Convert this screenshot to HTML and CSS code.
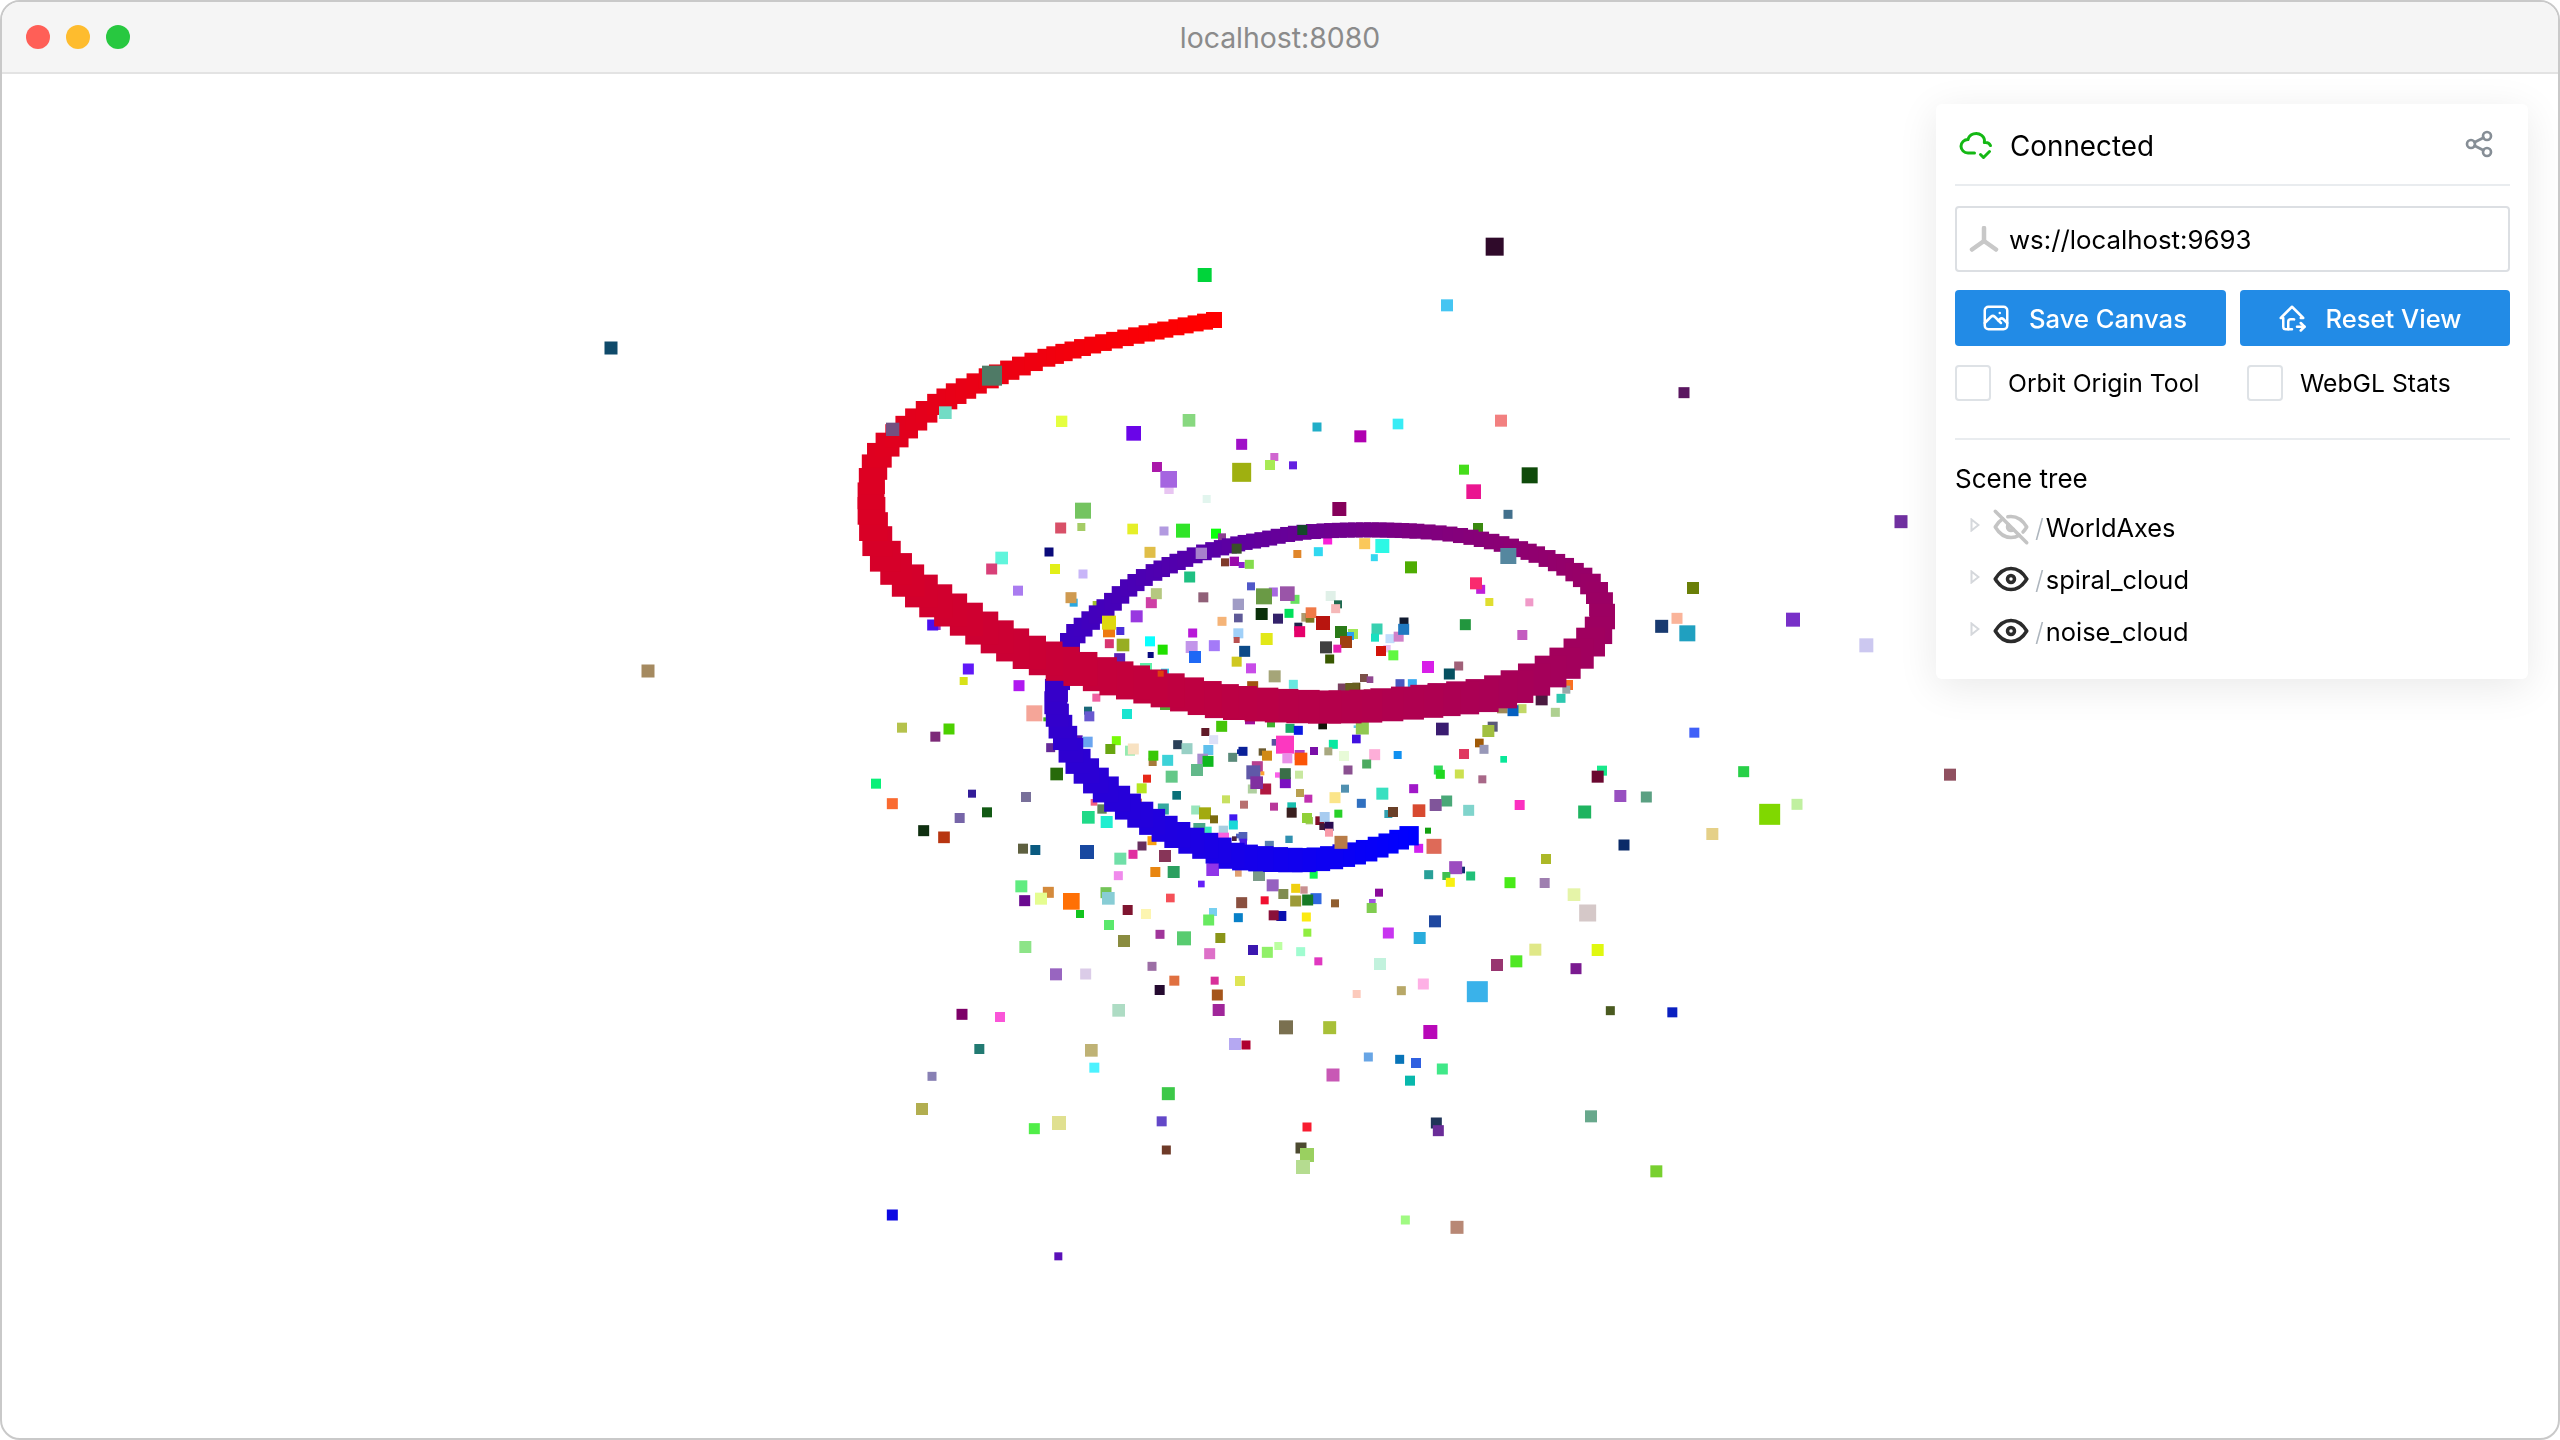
FILE: index.html
```html
<!DOCTYPE html>
<html lang="en">
<head>
    <meta charset="UTF-8">
    <title>localhost:8080</title>
    <link rel="stylesheet" href="styles.css">
</head>
<body>
    <div class="window">

        <!-- Title Bar -->
        <header class="titlebar">
            <div class="lights">
                <span class="light red"></span>
                <span class="light yellow"></span>
                <span class="light green"></span>
            </div>
            <div class="address">localhost:8080</div>
        </header>

        <!-- 3D View -->
        <main class="stage">
            <canvas id="scene"></canvas>

            <!-- Control Panel -->
            <aside class="panel">
                <div class="panel-head">
                    <svg class="icon cloud" viewBox="0 0 24 24">
                        <path d="M11 18.004h-4.343c-2.572 -.004 -4.657 -2.011 -4.657 -4.487c0 -2.475 2.085 -4.482 4.657 -4.482c.393 -1.762 1.794 -3.2 3.675 -3.773c1.88 -.572 3.956 -.193 5.444 1c1.488 1.19 2.162 3.007 1.77 4.769h.99c1.388 0 2.585 .82 3.138 2.007"/>
                        <path d="M15 19l2 2l4 -4"/>
                    </svg>
                    <span class="status">Connected</span>
                    <svg class="icon share" viewBox="0 0 24 24">
                        <path d="M6 12m-3 0a3 3 0 1 0 6 0a3 3 0 1 0 -6 0"/>
                        <path d="M18 6m-3 0a3 3 0 1 0 6 0a3 3 0 1 0 -6 0"/>
                        <path d="M18 18m-3 0a3 3 0 1 0 6 0a3 3 0 1 0 -6 0"/>
                        <path d="M8.7 10.7l6.6 -3.4"/>
                        <path d="M8.7 13.3l6.6 3.4"/>
                    </svg>
                </div>

                <div class="url-input">
                    <svg class="icon plug" viewBox="0 0 30 26">
                        <path d="M15 15L15 2"/>
                        <path d="M15 15L3 23.500"/>
                        <path d="M15 15L27 23.500"/>
                    </svg>
                    <span>ws://localhost:9693</span>
                </div>

                <div class="button-row">
                    <button class="btn save">
                        <svg class="icon" viewBox="0 0 24 24">
                            <path d="M15 8h.01"/>
                            <path d="M3 6a3 3 0 0 1 3 -3h12a3 3 0 0 1 3 3v12a3 3 0 0 1 -3 3h-12a3 3 0 0 1 -3 -3v-12z"/>
                            <path d="M3 16l5 -5c.928 -.893 2.072 -.893 3 0l5 5"/>
                            <path d="M14 14l1 -1c.928 -.893 2.072 -.893 3 0l3 3"/>
                        </svg>
                        Save Canvas
                    </button>
                    <button class="btn reset">
                        <svg class="icon" viewBox="0 0 24 24">
                            <path d="M9 21v-6a2 2 0 0 1 2 -2h2c.247 0 .484 .045 .702 .127"/>
                            <path d="M19 12h2l-9 -9l-9 9h2v7a2 2 0 0 0 2 2h5"/>
                            <path d="M16 19h6"/>
                            <path d="M19 16l3 3l-3 3"/>
                        </svg>
                        Reset View
                    </button>
                </div>

                <div class="check-row">
                    <label class="check orbit"><span class="box"></span>Orbit Origin Tool</label>
                    <label class="check"><span class="box"></span>WebGL Stats</label>
                </div>

                <hr class="rule">

                <h2 class="tree-title">Scene tree</h2>
                <ul class="tree">
                    <li class="tree-row">
                        <svg class="caret" viewBox="0 0 10 14"><path d="M1.500 1.500L8.500 7L1.500 12.500Z"/></svg>
                        <svg class="icon eye off" viewBox="0 0 24 24">
                            <path d="M10.585 10.587a2 2 0 0 0 2.829 2.828"/>
                            <path d="M16.681 16.673a8.717 8.717 0 0 1 -4.681 1.327c-3.6 0 -6.6 -2 -9 -6c1.272 -2.12 2.712 -3.678 4.32 -4.674m2.86 -1.146a9.055 9.055 0 0 1 1.82 -.18c3.6 0 6.6 2 9 6c-.666 1.11 -1.379 2.067 -2.138 2.87"/>
                            <path d="M3 3l18 18"/>
                        </svg>
                        <span class="node"><i>/</i>WorldAxes</span>
                    </li>
                    <li class="tree-row">
                        <svg class="caret" viewBox="0 0 10 14"><path d="M1.500 1.500L8.500 7L1.500 12.500Z"/></svg>
                        <svg class="icon eye" viewBox="0 0 24 24">
                            <path d="M10 12a2 2 0 1 0 4 0a2 2 0 0 0 -4 0"/>
                            <path d="M21 12c-2.4 4 -5.4 6 -9 6c-3.6 0 -6.6 -2 -9 -6c2.4 -4 5.4 -6 9 -6c3.6 0 6.6 2 9 6"/>
                        </svg>
                        <span class="node"><i>/</i>spiral_cloud</span>
                    </li>
                    <li class="tree-row">
                        <svg class="caret" viewBox="0 0 10 14"><path d="M1.500 1.500L8.500 7L1.500 12.500Z"/></svg>
                        <svg class="icon eye" viewBox="0 0 24 24">
                            <path d="M10 12a2 2 0 1 0 4 0a2 2 0 0 0 -4 0"/>
                            <path d="M21 12c-2.4 4 -5.4 6 -9 6c-3.6 0 -6.6 -2 -9 -6c2.4 -4 5.4 -6 9 -6c3.6 0 6.6 2 9 6"/>
                        </svg>
                        <span class="node"><i>/</i>noise_cloud</span>
                    </li>
                </ul>
            </aside>
        </main>
    </div>

    <script src="main.js"></script>
</body>
</html>
```

FILE: styles.css
```css
/* Reset & Global Styles */
* {
    margin: 0;
    padding: 0;
    box-sizing: border-box;
    font-family: "Inter", "Liberation Sans", sans-serif;
}

body {
    background: #fff;
    color: #000;
}

/* Window Frame */
.window {
    width: 2560px;
    height: 1440px;
    border: 2px solid #c9c9c9;
    border-radius: 20px;
    overflow: hidden;
    display: flex;
    flex-direction: column;
    background: #fff;
}

/* Title Bar */
.titlebar {
    height: 72px;
    flex: none;
    display: flex;
    align-items: center;
    position: relative;
    background: #f5f5f5;
    border-bottom: 2px solid #e3e3e3;
}

.lights {
    display: flex;
    gap: 16px;
    padding-left: 24px;
}

.light {
    width: 24px;
    height: 24px;
    border-radius: 50%;
}

.red { background: #ff5f57; }
.yellow { background: #febc2e; }
.green { background: #28c840; }

.address {
    position: absolute;
    left: 0;
    right: 0;
    text-align: center;
    font-size: 28.4px;
    color: #8b8b8b;
}

/* 3D View */
.stage {
    flex: 1;
    position: relative;
    overflow: hidden;
}

#scene {
    display: block;
    width: 100%;
    height: 100%;
}

/* Control Panel */
.panel {
    position: absolute;
    top: 30px;
    right: 30px;
    width: 592px;
    padding: 0 18px 22px 19px;
    background: #fff;
    border-radius: 6px;
    box-shadow: 0 8px 40px rgba(0, 0, 0, 0.09);
}

.icon {
    fill: none;
    stroke: currentColor;
    stroke-width: 2;
    stroke-linecap: round;
    stroke-linejoin: round;
    flex: none;
}

.panel-head {
    height: 82px;
    display: flex;
    align-items: center;
    border-bottom: 2px solid #e9ecef;
}

.cloud {
    width: 36px;
    height: 36px;
    margin-left: 3px;
    color: #14b814;
}

.status {
    margin-left: 16px;
    padding-top: 4px;
    font-size: 27.8px;
}

.share {
    width: 32px;
    height: 32px;
    margin-left: auto;
    margin-right: 15px;
    color: #868e96;
}

.url-input {
    height: 66px;
    margin-top: 20px;
    padding-left: 12px;
    display: flex;
    align-items: center;
    gap: 10px;
    font-size: 25.8px;
    border: 2px solid #dcdfe3;
    border-radius: 4px;
}

.plug {
    width: 30px;
    height: 26px;
    color: #c8c8c8;
    stroke-width: 4.500;
}

.button-row {
    display: grid;
    grid-template-columns: 1fr 1fr;
    gap: 14px;
    margin-top: 18px;
}

.btn {
    height: 56px;
    display: flex;
    align-items: center;
    border: none;
    border-radius: 4px;
    background: #228be6;
    color: #fff;
    font-size: 25.6px;
    font-weight: 500;
}

.btn .icon {
    width: 30px;
    height: 30px;
}

.save {
    padding-left: 26px;
    gap: 18px;
}

.reset {
    padding-left: 37px;
    gap: 19px;
}

.check-row {
    display: flex;
    margin-top: 19px;
}

.check {
    display: flex;
    align-items: center;
    gap: 17px;
    font-size: 24.7px;
}

.orbit {
    width: 292px;
}

.box {
    width: 36px;
    height: 36px;
    border: 2px solid #dee2e6;
    border-radius: 4px;
}

.rule {
    height: 2px;
    margin-top: 37px;
    border: none;
    background: #e9ecef;
}

.tree-title {
    margin-top: 21px;
    font-size: 26px;
    font-weight: 400;
    line-height: 36px;
}

.tree {
    list-style: none;
    margin-top: 4px;
}

.tree-row {
    height: 52px;
    display: flex;
    align-items: center;
}

.caret {
    width: 10px;
    height: 14px;
    margin-left: 15px;
    margin-top: -4px;
    fill: none;
    stroke: #d5d8dc;
    stroke-width: 2;
    flex: none;
}

.eye {
    width: 42px;
    height: 42px;
    margin-left: 10px;
    color: #2b2b2b;
}

.eye.off {
    color: #c4c4c4;
}

.node {
    margin-left: 3px;
    font-size: 25.4px;
}

.node i {
    font-style: normal;
    font-weight: 300;
    color: #adb5bd;
    margin-right: 2px;
}
```

FILE: main.js
```js
// Centre line of the spiral: x, y, point size (page pixels), from red end to blue end
const SPIRAL_KEYS = [
    [1214, 320, 16], [1173, 328, 16], [1073, 350, 17], [992, 377, 20], [940, 403, 21],
    [900, 433, 23], [877, 460, 25], [871, 500, 27], [878, 543, 30], [900, 573, 32],
    [930, 597, 33], [973, 623, 33], [1017, 647, 33], [1060, 663, 34], [1123, 680, 34],
    [1190, 695, 34], [1240, 703, 34], [1340, 707, 33], [1440, 700, 33], [1507, 690, 33],
    [1570, 660, 31], [1600, 627, 27], [1597, 593, 22], [1571, 570, 18], [1523, 550, 16],
    [1457, 535, 15], [1383, 530, 15], [1307, 532, 15], [1260, 540, 15], [1233, 545, 15],
    [1190, 557, 16], [1140, 580, 17], [1107, 607, 18], [1080, 630, 19], [1070, 643, 20],
    [1057, 687, 23], [1057, 713, 23], [1063, 733, 24], [1077, 760, 25], [1103, 787, 26],
    [1133, 810, 26], [1173, 833, 26], [1217, 850, 26], [1240, 857, 26], [1307, 860, 24],
    [1357, 853, 22], [1390, 843, 20], [1416, 833, 19]
];

// Noise cloud, tile by tile. Each tile: origin, then [x, y, size, colour] at 3x scale
const NOISE_BEHIND = [
    { x: 1240, y: 220, pts: [
        [764,80,54,"#2f0a2a"],[621,256,36,"#45c5f2"],[783,602,36,"#f28080"],[869,766,48,"#0f4a0a"],
        [701,815,44,"#ea1590"],[672,749,30,"#45dd1a"],[474,612,32,"#38ecf5"],[361,649,36,"#b000b0"],
        [231,621,27,"#20aec8"],[5,673,33,"#a010c8"],[103,711,24,"#d066d0"],[90,735,30,"#a8ea55"],
        [159,736,24,"#6420e0"],[5,757,57,"#9fb010"]
    ] },
    { x: 840, y: 220, pts: [
        [1094,165,42,"#00d43a"],[665,604,34,"#e5ff40"],[881,640,44,"#6a05e8"],[1047,601,38,"#88d880"],
        [951,741,30,"#aa18aa"],[987,808,28,"#e8c5f2"],[986,778,50,"#a565e0"],[1100,837,24,"#e2f5ee"],
        [729,872,48,"#74c460"]
    ] },
    { x: 840, y: 500, pts: [
        [662,84,33,"#d85068"],[724,81,24,"#a5cc66"],[878,87,32,"#e5ef28"],[972,93,27,"#b29ae0"],
        [1029,92,42,"#30e428"],[1128,101,30,"#0aff0a"],[1146,112,24,"#8c4090"],[1155,187,24,"#7f3a2a"],
        [1183,184,28,"#9a0aaa"],[485,174,38,"#60f5dc"],[455,207,33,"#d84078"],[627,156,27,"#0a0a7a"],
        [645,207,30,"#e2ef18"],[729,222,27,"#c8b5f8"],[930,157,33,"#e0be48"],[1049,231,33,"#1fc082"],
        [534,272,30,"#aa7cf0"],[701,308,24,"#2aa8e0"],[693,293,33,"#cf9a50"],[934,308,33,"#ce3fa5"],
        [1090,292,30,"#906078"],[1195,313,34,"#a09cc5"],[1146,364,27,"#f5b478"],[1195,354,26,"#5f5a98"],
        [890,349,36,"#9838e0"],[841,393,24,"#4a2ed8"],[1058,399,27,"#b818d8"],[767,312,18,"#a0c030"],
        [292,380,20,"#a030c0"],[278,375,33,"#4a10f0"],[488,377,10,"#7a4a10"],[1195,400,30,"#a0d0f8"],
        [1190,420,18,"#b85050"],[808,431,27,"#d83570"],[849,435,38,"#98ae22"],[930,424,30,"#08ffff"],
        [968,449,30,"#20e000"],[1055,441,36,"#c295ea"],[1123,437,33,"#a47af8"],[932,465,18,"#0a0a80"],
        [1065,471,36,"#1f68f5"],[839,476,33,"#5a20b8"],[1190,485,30,"#cfc820"],[385,507,33,"#6018f8"],
        [371,543,24,"#d8e218"],[537,557,33,"#b018f0"],[918,507,36,"#5ef0a8"],[975,518,24,"#25d0f0"],
        [583,640,48,"#f5a598"],[616,658,12,"#40b020"],[680,570,6,"#10e0c0"],[769,593,24,"#f060a0"],
        [744,632,24,"#1a6878"],[748,649,30,"#6858d0"],[861,642,30,"#18e5d0"],[975,615,30,"#58a838"],
        [1161,640,24,"#204080"],[186,683,30,"#b5c24c"],[327,687,33,"#4cd000"],[286,710,30,"#7c2a78"],
        [1145,679,33,"#45c508"],[1096,696,24,"#601a28"],[1121,719,27,"#dde0f8"],[1013,734,27,"#2a4058"],
        [1041,746,33,"#98d0c5"],[717,717,22,"#5a10b0"],[742,726,32,"#6aa5f0"],[829,722,27,"#78fa08"],
        [811,747,30,"#68a510"],[870,752,30,"#95eab0"],[880,747,33,"#f8e2c2"],[632,743,27,"#652a98"],
        [938,786,24,"#a57a3a"],[940,767,30,"#38c808"],[983,781,33,"#3dd2d8"],[1105,750,30,"#60c0ec"],
        [1088,777,32,"#a88cd0"],[1104,784,33,"#0fb81e"],[1178,772,27,"#5a8a7a"],[1198,755,14,"#0a2a98"],
        [1071,810,36,"#62b88a"],[995,830,36,"#64c888"],[650,822,38,"#276a0a"],[921,836,24,"#e62818"],
        [905,865,30,"#b5e620"],[1010,886,26,"#0a7078"],[1158,898,24,"#c8e060"],[108,851,30,"#08f078"],
        [157,911,33,"#fa6a30"],[396,881,24,"#321c98"],[558,891,30,"#78709a"],[441,937,30,"#125a14"],
        [359,954,30,"#7665a8"],[251,992,33,"#0f2f10"],[312,1012,35,"#b83510"],[762,907,20,"#f26080"],
        [786,927,28,"#5e8058"],[893,908,24,"#a03038"],[970,927,33,"#35a8a0"],[1067,930,27,"#98e5bc"],
        [1095,940,36,"#a2aa10"],[1122,958,24,"#7a6a10"],[1180,955,24,"#4018f0"],[745,952,38,"#20da88"],
        [800,966,36,"#1feed0"],[1078,987,36,"#4aa888"],[1105,990,20,"#38e8c0"],[1180,975,27,"#18d8d8"],
        [1150,991,28,"#a8cee0"],[1195,1008,14,"#5060c0"],[1150,1015,34,"#fa60e0"],[1183,1016,14,"#4a2040"],
        [936,1022,27,"#f8a010"],[906,1038,27,"#662e5e"],[549,1046,30,"#5e6040"],[586,1050,30,"#0a5a80"],
        [741,1056,42,"#1848a0"],[841,1076,36,"#70dfa8"],[879,1063,27,"#e02fa0"],[975,1068,36,"#873558"],
        [1121,1088,30,"#e010d0"],[1118,1109,38,"#9035e8"],[1195,1120,20,"#e0a070"],[946,1116,30,"#e88510"],
        [1001,1116,36,"#2ba060"],[835,1127,27,"#f08aec"],[1084,1152,20,"#6520f8"],[544,1159,36,"#60ec80"],
        [625,1177,33,"#d48a3c"]
    ] },
    { x: 840, y: 890, pts: [
        [554,32,33,"#6a0a90"],[603,26,36,"#e5fd90"],[694,34,50,"#ff7005"],[798,8,33,"#74c458"],
        [805,25,38,"#88cdd5"],[991,24,26,"#f55058"],[863,60,30,"#7f1530"],[918,72,30,"#fdf5b0"],
        [720,72,24,"#12c41e"],[807,105,30,"#5ae86c"],[1119,66,24,"#78d0f0"],[1106,90,33,"#68ea60"],
        [1195,83,27,"#0880c8"],[960,133,27,"#a0359a"],[1032,145,42,"#58cc70"],[1141,144,30,"#8a9518"],
        [852,153,36,"#8a8c40"],[556,171,36,"#8de488"],[1109,191,33,"#dd70c8"],[648,253,36,"#9865c0"],
        [737,252,33,"#dbcce8"],[936,229,27,"#9c6ea5"],[1003,272,30,"#e07040"],[1124,272,24,"#d8309a"],
        [1200,273,30,"#dfe555"],[959,300,30,"#250a30"],[1132,315,33,"#a5551a"],[836,361,38,"#aedcc4"],
        [1136,360,36,"#a0269a"],[366,373,33,"#7d0068"],[480,381,30,"#fa55d8"],[418,477,30,"#227a72"],
        [754,481,38,"#bfb275"],[1185,462,36,"#b5a8f2"],[763,533,30,"#4cf2ff"],[276,559,27,"#8880b4"],
        [246,657,36,"#b2ae50"],[985,611,39,"#3cc848"],[965,694,30,"#6348c8"],[583,716,33,"#50ee48"],
        [657,699,42,"#e0e090"],[979,780,27,"#6e3a28"],[157,975,33,"#0c08e2"],[655,1099,24,"#5a10b8"]
    ] },
    { x: 1240, y: 500, pts: [
        [298,27,42,"#85005a"],[804,43,27,"#42708c"],[714,84,30,"#3a8a10"],[263,120,27,"#fa20d8"],
        [374,131,33,"#fac85a"],[427,138,42,"#2cf8e5"],[172,162,24,"#e0862a"],[235,155,27,"#30d8f0"],
        [403,173,21,"#34d8f0"],[513,202,36,"#4eac02"],[722,268,27,"#c020d8"],[708,250,36,"#fa2a6e"],
        [748,306,24,"#e0de30"],[868,307,24,"#f09ac8"],[5,195,18,"#8a20d0"],[28,193,27,"#84dc4c"],
        [33,259,24,"#5058c8"],[100,276,27,"#a868e0"],[72,289,48,"#6a9a45"],[165,298,27,"#68e060"],
        [142,281,44,"#9a55a8"],[272,288,30,"#e0f0e8"],[294,313,24,"#1f6a50"],[287,326,27,"#f5b8b8"],
        [65,342,36,"#0a300a"],[114,356,30,"#33226a"],[147,340,27,"#00e05a"],[197,352,26,"#b09a70"],
        [210,355,26,"#7a7820"],[213,338,32,"#f07a48"],[249,369,42,"#b8150f"],[175,380,24,"#20204a"],
        [179,395,33,"#e5006a"],[339,402,30,"#a0e858"],[330,408,24,"#28a0f0"],[303,396,36,"#2a7a18"],
        [318,426,36,"#a04010"],[292,446,24,"#e820b0"],[258,442,36,"#404040"],[269,477,27,"#385800"],
        [80,417,36,"#e2e818"],[14,454,33,"#0c4a88"],[411,387,33,"#38d0b0"],[405,413,24,"#18e0c0"],
        [492,366,27,"#101a30"],[450,416,27,"#c0dcfc"],[476,410,30,"#d080c8"],[491,388,33,"#1f78c0"],
        [441,446,22,"#e8c0f0"],[423,453,30,"#d2140a"],[460,466,30,"#60f840"],[676,374,33,"#22963e"],
        [847,405,30,"#c45cc0"],[33,505,30,"#c84ce8"],[104,529,36,"#a5a578"],[160,553,27,"#68e8e0"],
        [38,560,33,"#a05510"],[310,567,33,"#7a4060"],[349,560,24,"#58400a"],[337,570,42,"#686020"],
        [372,534,24,"#7a5048"],[390,539,20,"#904890"],[381,577,20,"#c06078"],[480,551,27,"#4858c0"],
        [517,551,27,"#38a8f0"],[564,501,36,"#d81fe8"],[656,498,27,"#a06078"],[628,522,33,"#065060"],
        [577,566,30,"#b090a8"],[984,555,30,"#fa7020"],[979,569,24,"#98a8a8"],[905,598,36,"#4a1a40"],
        [963,595,27,"#2cc8b0"],[787,624,32,"#9e8a58"],[846,626,27,"#c2d868"],[819,632,33,"#0560c0"],
        [946,637,27,"#aed090"],[30,658,30,"#a0109a"],[93,670,24,"#40b030"],[248,675,26,"#101408"],
        [150,685,27,"#18ac68"],[175,691,27,"#0a18e0"],[345,680,8,"#60c8e8"],[367,684,39,"#90c850"],
        [607,687,38,"#3a1c70"],[758,680,30,"#5a5a78"],[745,693,36,"#a2c040"],[349,717,26,"#4010e0"],
        [718,729,26,"#a05a08"],[732,748,27,"#9898b8"],[791,778,20,"#08e898"],[105,727,20,"#5a50a0"],
        [135,734,54,"#fc38c0"],[280,733,27,"#08e8a0"],[222,753,24,"#7a10a8"],[265,754,24,"#a8a880"],
        [312,768,30,"#e8fbd8"],[404,764,33,"#fdaed8"],[473,765,24,"#1090f0"],[672,762,30,"#e03860"],
        [9,754,27,"#0a2098"],[67,756,22,"#6a5a30"],[81,767,30,"#d08a14"],[142,775,30,"#e890e8"],
        [179,765,30,"#b040c0"],[183,777,38,"#fb5508"],[380,792,27,"#4caa60"],[324,810,27,"#8a5090"],
        [595,810,27,"#30d858"],[601,823,27,"#20d820"],[658,822,27,"#cce050"],[727,838,24,"#a86888"],
        [1086,812,30,"#18e88a"],[1073,830,36,"#6a0830"],[52,800,33,"#b84090"],[67,820,12,"#fca030"],
        [40,817,42,"#6058a8"],[113,825,16,"#fa60e8"],[136,848,33,"#7a10c0"],[136,821,33,"#3a6e48"],
        [177,824,24,"#c8e8a0"],[37,867,27,"#b0d0a0"],[77,867,33,"#b01840"],[50,848,38,"#8030a0"],
        [180,879,24,"#b8a050"],[315,866,24,"#5090b0"],[521,866,27,"#a018c8"],[285,893,33,"#fbe58a"],
        [427,881,36,"#38e0c0"],[205,896,24,"#c030b0"],[12,914,24,"#b87070"],[102,920,24,"#b8389a"],
        [364,910,27,"#3070c0"],[620,903,33,"#4aa878"],[587,915,36,"#80559a"],[537,932,38,"#d84a30"],
        [686,931,33,"#80d4cc"],[839,915,30,"#fc30c0"],[1034,936,39,"#1fb460"],[1141,888,36,"#9850c0"],
        [155,920,26,"#18c0b0"],[155,938,30,"#3a2020"],[445,942,24,"#30a0b0"],[459,936,30,"#6a4028"],
        [208,962,22,"#a0c860"],[201,954,30,"#90d038"],[295,941,24,"#28d028"],[239,962,26,"#801028"],
        [254,951,30,"#a8ccf0"],[248,980,20,"#401838"],[267,979,27,"#280a50"],[267,998,24,"#f89aa8"],
        [564,992,18,"#12a010"],[9,1009,26,"#5060b8"],[10,1027,22,"#4818e8"],[88,1036,27,"#5a80b0"],
        [147,1018,22,"#3090b0"],[536,1045,27,"#d020f0"],[582,1039,45,"#de6a58"],[1152,1035,33,"#0a2a68"],
        [918,1077,30,"#acb828"],[665,1110,20,"#102a70"],[647,1103,39,"#9c4cc0"],[566,1124,27,"#28a098"],
        [619,1128,24,"#40c050"],[631,1147,27,"#f8f010"],[692,1128,27,"#20c078"],[221,1124,24,"#10f850"],
        [810,1148,33,"#48ea18"],[914,1149,30,"#9f7fb0"],[1002,1184,38,"#e5f4a8"],[57,1125,36,"#7a9a88"],
        [98,1156,36,"#9560c0"],[130,1182,30,"#808c50"],[167,1165,27,"#f0d010"],[192,1170,22,"#c89090"],
        [417,1178,24,"#8a0a9a"]
    ] },
    { x: 1240, y: 890, pts: [
        [228,26,33,"#3068e0"],[167,33,33,"#9c9a38"],[203,30,33,"#157a25"],[74,31,24,"#f01030"],
        [5,38,33,"#8a5040"],[285,40,24,"#905e30"],[397,37,20,"#a050e0"],[395,54,30,"#80cc50"],
        [1043,69,51,"#d5c8c8"],[124,78,30,"#0a10b0"],[101,76,30,"#8a103a"],[199,81,27,"#fcea10"],
        [585,94,36,"#1f48a0"],[202,128,24,"#90ee40"],[445,129,33,"#c835f0"],[539,144,36,"#28acdc"],
        [39,180,30,"#3c18b0"],[115,168,24,"#bcffa0"],[82,187,33,"#90f068"],[182,185,27,"#a0fcd0"],
        [235,214,24,"#e038c0"],[420,222,36,"#c2f2dd"],[886,179,36,"#e0e888"],[1073,180,36,"#e0f810"],
        [771,225,36,"#983570"],[829,214,36,"#50e825"],[1008,236,33,"#7a1a90"],[550,282,33,"#feb0e5"],
        [350,312,24,"#fccabc"],[484,302,27,"#b8a868"],[712,305,63,"#3ab2ea"],[1111,362,27,"#4a5a20"],
        [138,412,42,"#7a7050"],[269,413,39,"#a8c038"],[571,426,42,"#b808b8"],[18,465,27,"#b00030"],
        [385,501,27,"#68a5e5"],[479,508,27,"#0874b8"],[528,519,30,"#3060e0"],[607,537,33,"#40e888"],
        [510,572,30,"#08b8ac"],[279,555,39,"#c858b5"],[589,699,33,"#203458"],[595,722,33,"#6a2c98"],
        [1053,679,36,"#68a88c"],[201,711,27,"#f81c30"],[183,774,33,"#4c4a30"],[201,795,42,"#9ad060"],
        [189,831,42,"#b5dc90"],[496,990,27,"#a0fa82"],[651,1012,39,"#b88875"]
    ] },
    { x: 1630, y: 340, pts: [
        [162,158,33,"#5a1660"],[813,545,39,"#7030a0"],[189,744,36,"#6a7f08"],[141,835,33,"#fab49a"],
        [95,859,39,"#183a70"],[172,880,48,"#20a0c0"],[489,839,42,"#7830c8"],[709,916,42,"#ccc8f0"],
        [193,1178,30,"#4060f8"],[341,1295,33,"#28d048"],[960,1304,36,"#905060"],[49,1371,33,"#5aa082"],
        [419,1423,63,"#80d800"],[501,1393,33,"#c0f0a0"],[247,1482,36,"#e5d088"]
    ] },
    { x: 1630, y: 840, pts: [[127,517,30,"#0a20c0"],[79,994,36,"#78d030"]] },
    { x: 560, y: 640, pts: [[264,93,39,"#a58a60"]] },
    { x: 560, y: 300, pts: [[153,144,39,"#0f4a6a"]] }
];

// These sit in front of the spiral
const NOISE_FRONT = [
    { x: 840, y: 220, pts: [[456,467,60,"#4f7a66"],[316,578,38,"#72dcc5"],[158,628,40,"#735080"]] },
    { x: 840, y: 500, pts: [
        [1190,146,30,"#3a4f2a"],[1084,160,34,"#a880cc"],[949,281,33,"#b5c880"],[807,394,36,"#ee7a10"],
        [807,368,42,"#dfd80f"],[962,521,18,"#e04010"]
    ] },
    { x: 1240, y: 500, pts: [[187,90,30,"#14482a"],[805,168,48,"#55879f"],[303,1027,39,"#b87c48"]] }
];

const canvas = document.getElementById("scene");
const rect = canvas.getBoundingClientRect();
canvas.width = rect.width;
canvas.height = rect.height;
const ctx = canvas.getContext("2d");
ctx.translate(-rect.left, -rect.top);

function drawNoise(tiles) {
    tiles.forEach(tile => {
        tile.pts.forEach(([x, y, size, colour]) => {
            const s = size / 3;
            ctx.fillStyle = colour;
            ctx.fillRect(tile.x + x / 3 - s / 2, tile.y + y / 3 - s / 2, s, s);
        });
    });
}

// Catmull-Rom through the keys, sampled finely
function sampleSpiral(keys) {
    const fine = [];
    for (let i = 0; i < keys.length - 1; i++) {
        const p0 = keys[Math.max(i - 1, 0)];
        const p1 = keys[i];
        const p2 = keys[i + 1];
        const p3 = keys[Math.min(i + 2, keys.length - 1)];
        for (let t = 0; t < 1; t += 0.05) {
            const c = [0, 1].map(k =>
                0.5 * (2 * p1[k] + (p2[k] - p0[k]) * t +
                    (2 * p0[k] - 5 * p1[k] + 4 * p2[k] - p3[k]) * t * t +
                    (3 * p1[k] - p0[k] - 3 * p2[k] + p3[k]) * t * t * t));
            fine.push([c[0], c[1], p1[2] + (p2[2] - p1[2]) * t]);
        }
    }
    fine.push(keys[keys.length - 1]);
    return fine;
}

function drawSpiral() {
    const fine = sampleSpiral(SPIRAL_KEYS);
    const points = [fine[0]];
    let walked = 0;
    for (let i = 1; i < fine.length; i++) {
        walked += Math.hypot(fine[i][0] - fine[i - 1][0], fine[i][1] - fine[i - 1][1]);
        // point spacing follows perspective, so it scales with the size
        if (walked >= fine[i][2] * 0.5) {
            points.push(fine[i]);
            walked = 0;
        }
    }
    // blue end first, so the red band passes over it at the crossing
    for (let i = points.length - 1; i >= 0; i--) {
        const [x, y, s] = points[i];
        const t = Math.pow(i / (points.length - 1), 1.2);
        ctx.fillStyle = `rgb(${Math.round(255 * (1 - t))}, 0, ${Math.round(255 * t)})`;
        ctx.fillRect(x - s / 2, y - s / 2, s, s);
    }
}

drawNoise(NOISE_BEHIND);
drawSpiral();
drawNoise(NOISE_FRONT);
```
